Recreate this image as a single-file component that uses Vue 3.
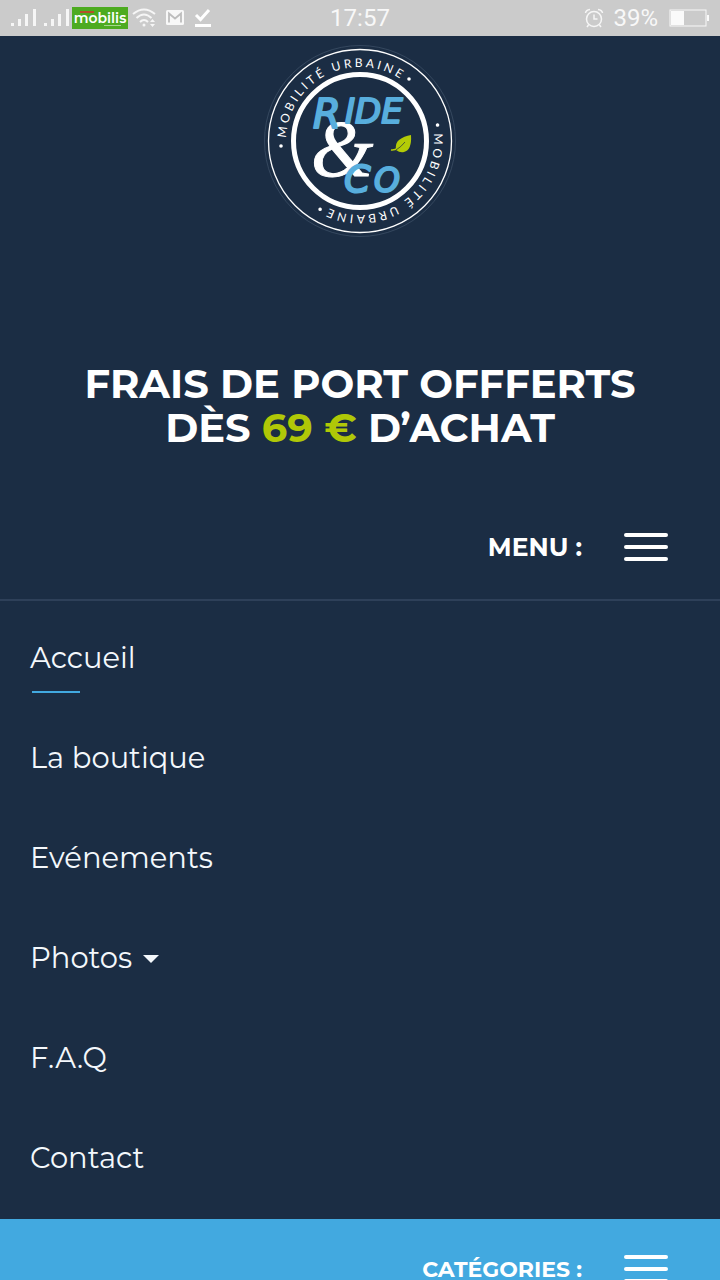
<script setup>
import { ref } from 'vue';

const menuOpen = ref(true);
const categoriesOpen = ref(false);

const links = [
  { label: 'Accueil', active: true },
  { label: 'La boutique' },
  { label: 'Evénements' },
  { label: 'Photos', dropdown: true },
  { label: 'F.A.Q' },
  { label: 'Contact' },
];
</script>

<template>
  <div class="screen">
    <div class="status-bar">
      <div class="status-left">
        <svg class="signal" viewBox="0 0 58 20" fill="#f6f6f6">
          <path d="M1 15h3v3H1zM8 11h3v7H8zM15 6h3v12h-3zM23 1h3v17h-3zM34 15h3v3h-3zM41 11h3v7h-3zM48 6h3v12h-3zM56 1h3v17h-3z" />
        </svg>
        <div class="carrier">mobilis</div>
        <svg class="wifi" viewBox="0 0 26 20" fill="none" stroke="#f6f6f6" stroke-width="2">
          <path d="M1 6Q12-3 23 6M4.500 10Q12 3 19.500 10M8 14Q12 10 16 14" />
          <circle cx="12" cy="17" r="1.500" fill="#f6f6f6" stroke="none" />
          <path d="M18 14l2.500-3 2.500 3zM18 16l2.500 3 2.500-3z" fill="#f6f6f6" stroke="none" />
        </svg>
        <svg class="mail" viewBox="0 0 20 18">
          <rect x="1" y="1" width="18" height="15" rx="1.500" fill="#f8f8f8" />
          <path d="M4 13.500V4.500L10 9.500 16 4.500v9" fill="none" stroke="#bdbdbd" stroke-width="1.800" />
        </svg>
        <svg class="check" viewBox="0 0 18 20" fill="none" stroke="#fff" stroke-width="3">
          <path d="M2 7l4.500 4.500L15 2M1 17.500h16" />
        </svg>
      </div>
      <div class="status-time">17:57</div>
      <div class="status-right">
        <svg class="alarm" viewBox="0 0 20 20" fill="none" stroke="#f6f6f6" stroke-width="1.500">
          <circle cx="10" cy="11" r="7.500" />
          <path d="M10 6.500V11h3.500M1.500 5Q2 2 6 1.500M18.500 5Q18 2 14 1.500M4.500 17L3 19M15.500 17l1.500 2" />
        </svg>
        <span class="percent">39%</span>
        <svg class="battery" viewBox="0 0 41 18">
          <rect x="1" y="1" width="36" height="16" fill="none" stroke="#f8f8f8" />
          <path d="M2 2h13v14H2zM38 6h2v6h-2z" fill="#fafafa" />
        </svg>
      </div>
    </div>

    <main class="page">
      <header class="header">
        <a href="#" class="logo-link" aria-label="Ride &amp; Co">
          <svg class="logo" viewBox="0 0 192 192">
            <defs>
              <path id="ring-text" d="M22 96a74 74 0 0 1 148 0a74 74 0 0 1-148 0" />
            </defs>
            <circle cx="96" cy="96" r="95.500" fill="none" stroke="#40536a" stroke-width="0.700" />
            <circle cx="96" cy="96" r="91.500" fill="none" stroke="#fff" stroke-width="1.300" />
            <circle cx="96" cy="96" r="66.500" fill="none" stroke="#fff" stroke-width="5" />
            <g v-for="angle in [0, 172]" :key="angle" :transform="`rotate(${angle} 96 96)`">
              <circle cx="17" cy="101" r="1.800" fill="#fff" />
              <circle cx="145" cy="34" r="1.800" fill="#fff" />
              <text class="ring-text"><textPath href="#ring-text" startOffset="3">MOBILITÉ URBAINE</textPath></text>
            </g>
            <text class="ampersand" x="47" y="131">&amp;</text>
            <text class="brush" font-size="40" x="49" y="83">R</text>
            <text class="brush" font-size="34" x="81" y="78">IDE</text>
            <text class="brush" font-size="38" x="80" y="147">C</text>
            <text class="brush" font-size="33" x="110" y="147">O</text>
            <path d="M147 90Q148 105 140 107Q136 108 132 105Q131 98 135 95Q140 91 147 90z" fill="#b3cb07" />
            <path d="M127 105Q133 106 141 97" fill="none" stroke="#b3cb07" stroke-width="1.500" />
            <path d="M132 105Q137 102 141 97" fill="none" stroke="#1b2d44" stroke-width="0.700" />
          </svg>
        </a>

        <h1 class="promo">
          FRAIS DE PORT OFFFERTS<br />
          DÈS <span class="price">69 €</span> D’ACHAT
        </h1>

        <button type="button" class="toggle" :aria-expanded="menuOpen" @click="menuOpen = !menuOpen">
          <span>MENU :</span>
          <span class="burger"><i></i><i></i><i></i></span>
        </button>
      </header>

      <nav v-show="menuOpen" class="nav">
        <a
          v-for="link in links"
          :key="link.label"
          href="#"
          class="nav-link"
          :class="{ active: link.active }"
        >
          {{ link.label }}
          <span v-if="link.dropdown" class="caret"></span>
        </a>
      </nav>

      <section class="categories">
        <button
          type="button"
          class="toggle toggle-small"
          :aria-expanded="categoriesOpen"
          @click="categoriesOpen = !categoriesOpen"
        >
          <span>CATÉGORIES :</span>
          <span class="burger"><i></i><i></i><i></i></span>
        </button>
      </section>
    </main>
  </div>
</template>

<style>
body {
  margin: 0;
  background: #1b2d44;
}
</style>

<style scoped>
.screen {
  height: 100vh;
  display: flex;
  flex-direction: column;
  background: #1b2d44;
  color: #fff;
  font-family: Montserrat, Inter, sans-serif;
}

.status-bar {
  flex: none;
  display: grid;
  grid-template-columns: 1fr auto 1fr;
  align-items: center;
  height: 36px;
  padding: 0 10px;
  background: #cbcbcb;
  color: #f8f8f8;
  font-family: Roboto, sans-serif;
  font-size: 24px;
}

.status-left,
.status-right {
  display: flex;
  align-items: center;
}

.status-right {
  justify-content: flex-end;
}

.signal {
  width: 58px;
  height: 20px;
  overflow: visible;
}

.carrier {
  position: relative;
  width: 56px;
  height: 22px;
  margin-left: 4px;
  background: #4dab20;
  color: #fff;
  font: 600 14px/22px Montserrat, Inter, sans-serif;
  text-align: center;
}

.carrier::before {
  content: "";
  position: absolute;
  top: 4px;
  left: 8px;
  width: 14px;
  height: 2px;
  background: #b5502a;
}

.carrier::after {
  content: "";
  position: absolute;
  right: 7px;
  bottom: 3px;
  width: 17px;
  height: 1px;
  background: #a5d58c;
}

.wifi {
  width: 26px;
  height: 20px;
  margin-left: 4px;
}

.mail {
  width: 20px;
  height: 18px;
  margin-left: 7px;
}

.check {
  width: 18px;
  height: 20px;
  margin-left: 9px;
}

.alarm {
  width: 20px;
  height: 20px;
  margin-right: 9px;
}

.battery {
  width: 41px;
  height: 18px;
  margin-left: 11px;
}

.page {
  flex: 1;
  min-height: 0;
  overflow-y: auto;
  scrollbar-width: none;
}

.header {
  display: flex;
  flex-direction: column;
  align-items: center;
  padding-top: 9px;
  border-bottom: 2px solid #2e4059;
}

.logo-link,
.logo {
  display: block;
  width: 192px;
  height: 192px;
}

.ring-text {
  fill: #fff;
  font-family: Lato, sans-serif;
  font-size: 12px;
  font-weight: 400;
  letter-spacing: 3px;
}

.brush {
  fill: #58aedd;
  stroke: #58aedd;
  stroke-width: 2px;
  stroke-linejoin: round;
  font-family: "DejaVu Sans", sans-serif;
  font-style: italic;
}

.ampersand {
  fill: #fff;
  stroke: #fff;
  stroke-width: 1px;
  font-family: "Liberation Serif", serif;
  font-size: 80px;
  font-style: italic;
}

.promo {
  margin: 125px 0 0;
  font-size: 40px;
  font-weight: 700;
  line-height: 44px;
  text-align: center;
}

.price {
  color: #b0c807;
}

.toggle {
  display: flex;
  align-items: center;
  align-self: flex-end;
  gap: 42px;
  height: 104px;
  margin: 45px 52px 0 0;
  padding: 0;
  border: 0;
  background: transparent;
  color: inherit;
  font: inherit;
  font-size: 25px;
  font-weight: 700;
  cursor: pointer;
}

.toggle-small {
  height: 100px;
  margin: 0;
  font-size: 22px;
}

.burger {
  display: flex;
  flex-direction: column;
  gap: 8px;
}

.burger i {
  width: 44px;
  height: 4px;
  border-radius: 2px;
  background: #fff;
}

.nav {
  padding: 6px 30px 12px;
}

.nav-link {
  display: flex;
  align-items: center;
  position: relative;
  height: 100px;
  color: #f4f8fc;
  font-size: 29px;
  font-weight: 400;
  text-decoration: none;
}

.active::after {
  content: "";
  position: absolute;
  left: 2px;
  bottom: 14px;
  width: 48px;
  height: 2px;
  background: #42a9e0;
}

.caret {
  margin: 4px 0 0 11px;
  border: 8px solid transparent;
  border-top-color: #f4f8fc;
  border-bottom: 0;
}

.categories {
  display: flex;
  justify-content: flex-end;
  padding-right: 52px;
  background: #42a9e0;
}
</style>
